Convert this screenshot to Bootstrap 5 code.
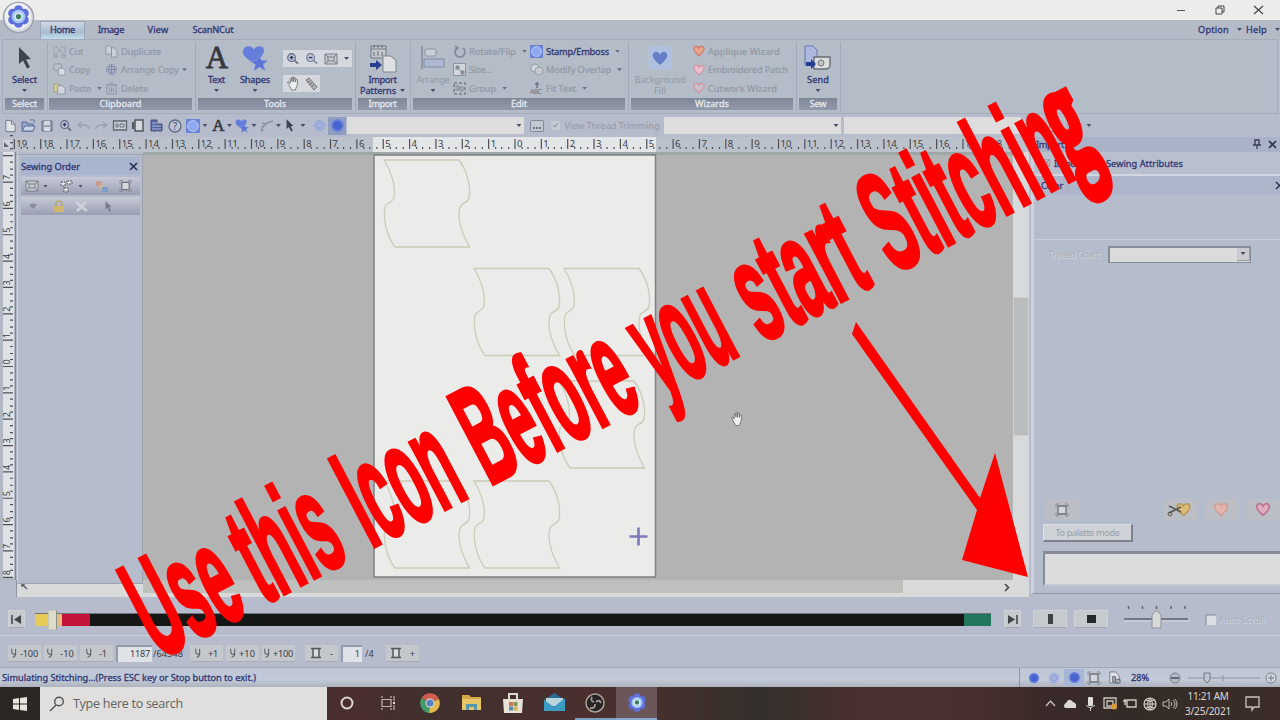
<!DOCTYPE html>
<html lang="en">
<head>
    <meta charset="UTF-8">
    <title>Sewing Simulator</title>
    <meta name="viewport" content="width=device-width, initial-scale=1">
    <!-- Bootstrap CSS CDN -->
    <link href="https://cdn.jsdelivr.net/npm/bootstrap@5.3.2/dist/css/bootstrap.min.css" rel="stylesheet">
    <style>
        body { width: 1280px; height: 720px; overflow: hidden; background: #b6bccb; font: 9.2px/11px "Noto Sans", "Open Sans", sans-serif; color: #33396f; }
        svg { display: block; flex: none; overflow: visible; }
        [data-w] { display: inline-block; white-space: nowrap; flex: none; }
        .caret { width: 5px; height: 3px; background: #4b4f68; clip-path: polygon(0 0, 100% 0, 50% 100%); flex: none; }
        .muted { color: #9299a6; }
        .navy, .cmd.navy { color: #2f3674; -webkit-text-stroke: .3px #2f3674; }

        /* title bar and tabs */
        .titlebar { height: 20px; background: #ececea; padding-right: 17px; gap: 30px; }
        .app-orb { left: 2px; top: 1px; z-index: 5; }
        .tabs { height: 19px; background: #b5bac7; padding-left: 40px; }
        .tab { height: 18px; padding-top: 3px; text-align: center; }
        .tab-home { width: 45px; padding-top: 2px; background: linear-gradient(#cfd9e2, #a9bccf 60%, #bfe0ee); border: 1px solid #9aa7b9; border-bottom: 0; }

        /* ribbon */
        .ribbon { height: 75px; margin: 0 2px; padding-left: 2px; background: #b3bcc7; border: 1px solid #a4acb9; gap: 6px; }
        .group { height: 73px; padding-top: 2px; position: relative; }
        .group::after { content: ""; width: 1px; position: absolute; top: 2px; bottom: 2px; right: -4px; background: #a3aab7; }
        .group-body { height: 56px; }
        .group-title { height: 12px; background: linear-gradient(#7f8797, #9299aa); color: #e4e7ee; -webkit-text-stroke: .3px #e4e7ee; text-align: center; line-height: 12px; }
        .g-select { width: 39px; margin-right: -1px; } .g-clip { width: 143px; } .g-tools { width: 154px; } .g-import { width: 49px; }
        .g-edit { width: 212px; } .g-wiz { width: 162px; } .g-sew { width: 38px; }
        .cmds { display: grid; grid-template-rows: repeat(3, 18.5px); }
        .cmd { display: flex; align-items: center; gap: 3px; height: 18.5px; color: #9299a6; -webkit-text-stroke: .2px; white-space: nowrap; }
        .cmd .caret { margin-left: 3px; opacity: .7; }
        .big { display: flex; flex-direction: column; align-items: center; line-height: 11px; }
        .big .pic { height: 32px; display: flex; align-items: center; }
        .strip { background: #d5d9df; height: 17px; gap: 6px; padding: 0 3px; }

        /* quick toolbar */
        .quick { height: 23px; padding-left: 1px; }
        .q { width: 18.3px; display: flex; justify-content: center; }
        .q2 { width: 24.5px; display: flex; align-items: center; justify-content: flex-end; gap: 2px; padding-right: 1px; }
        .q3 { width: 18px; height: 18px; display: flex; align-items: center; justify-content: center; }
        .combo { height: 17px; background: #dcdddc; padding-right: 3px; display: flex; align-items: center; justify-content: flex-end; }

        /* work area */
        .work { height: 460px; }
        .left { width: 1031px; }
        .hrule { height: 15px; }
        .stage { height: 428px; }
        .vrule { width: 17px; }
        .order { width: 126px; height: 430px; background: #b5bccb; border: 1px solid #9ea3ad; border-left-color: #cdd2dc; z-index: 2; padding: 2px 2px 0 3px; margin: 2px 0 -8px; }
        .order-head { height: 18px; background: #a9b4cf; padding: 0 3px 0 0; }
        .order-bar { height: 18px; background: linear-gradient(#c7c9d6, #9b9fb3); margin-top: 2px; }
        .canvas { width: 870px; background: #b3b3b3; border-top: 3px solid #a0a5a7; }
        .vscroll { width: 16px; background: #d8d9da; padding-top: 145px; }
        .vthumb { height: 139px; background: #bbbcbe; border: 1px solid #cfcfcf; }
        .hscroll { height: 17px; margin-left: 16px; width: 1013px; border-left: 1px solid #8e949d; background: #d9dbda; }
        .hthumb { width: 760px; height: 13px; background: #bec0be; }
        .side { width: 249px; border-left: 3px solid #ccd2de; background: #b5bccb; height: 457px; border-bottom: 1px solid #8e95a5; }
        .side-head { height: 15px; background: #aab2c7; padding: 0 3px 0 2px; }
        .side-tabs { height: 22px; padding-left: 7px; background: #b9bfcd; }
        .color-head { height: 21px; background: #adb5ca; border-top: 2px solid #d2d8e1; padding-left: 7px; }
        .engraved { color: #a8aebb; text-shadow: 1px 1px 0 #d3d7df; }
        .chart-row { height: 23px; border-top: 1px solid #c9cfda; padding: 6px 29px 0 14px; margin-top: 44px; }
        .chart-combo { width: 143px; height: 17px; background: #dadbdb; border: 1px solid #858b98; border-width: 2px 1px 1px 2px; }
        .drop { width: 13px; height: 13px; background: #c9cbd0; border: 1px solid #999da6; border-width: 0 1px 1px 0; }
        .hearts { height: 21px; margin-top: 237px; padding-left: 11px; }
        .hbtn { height: 21px; width: 34px; background: #bbbec4; display: flex; align-items: center; justify-content: center; }
        .palette { width: 90px; height: 18px; margin: 4px 0 0 9px; background: #cfd2d7; border: 1px solid #dee0e4; border-right: 2px solid #7c818d; border-bottom: 2px solid #7c818d; text-align: center; line-height: 15px; color: #9a9ea9; }
        .memo { height: 35px; margin: 9px 0 0 9px; background: #dadbdc; border: 2px solid #868b96; border-width: 3px 0 2px 2px; border-bottom-color: #c3c8d1; }

        /* player */
        .player { height: 38px; padding-left: 8px; padding-top: 6px; }
        .pbtn { height: 18px; background: #c6c9cd; border: 1px solid #d0d3d8; border-bottom-color: #a3a8b3; display: flex; align-items: center; justify-content: center; }
        .threads { width: 956px; height: 13px; margin: 0 13px 0 10px; background: #141716; border-top: 1px solid #6e737c; position: relative; }
        .seg { height: 12px; }
        .knob { position: absolute; left: 13px; top: -4px; width: 9px; height: 20px; background: #dedccb; border: 1px solid #c8c7bb; border-right-color: #8e8e86; }
        .steps { height: 33px; padding: 4px 0 0 8px; border-top: 1px solid #ccd2dc; border-bottom: 1px solid #a1a8b6; color: #3c404c; }
        .sbtn { width: 33px; height: 17px; background: #c4c7cc; border-bottom: 1px solid #a8acb5; display: flex; align-items: center; justify-content: center; gap: 2px; }
        .num { height: 17px; background: #dfe2e6; border: 1px solid #959ba8; border-width: 2px 0 0 2px; text-align: right; padding-right: 2px; line-height: 14px; }
        .statusline { height: 19px; background: linear-gradient(#bdc6d6, #c3cbd8 60%, #adb3bd); padding-left: 2px; }
        .sq { width: 20px; display: flex; justify-content: center; align-items: center; }

        /* taskbar */
        .task { height: 33px; background: linear-gradient(90deg, #2b2726 40px, #4c2e2e 330px, #40302d 430px, #4b2f2f 590px, #42302c 680px, #34302c 760px, #4a302f 860px, #49302e 970px, #3a2a29 1040px, #332b27 1130px, #3c2d29 1279px); color: #dcd8d4; }
        .start { width: 40px; height: 33px; background: #2a2724; }
        .searchbox { width: 287px; height: 33px; background: #e0dfdd; color: #626261; font: 12.5px "Open Sans", sans-serif; padding-left: 10px; gap: 8px; }
        .tk { width: 41.3px; height: 33px; display: flex; align-items: center; justify-content: center; border-bottom: 2px solid transparent; }
        .tk-open { border-bottom-color: #7b9ec2; }
        .tk-on { background: #6b5759; border-bottom-color: #89a9ce; }
        .tray { width: 20px; display: flex; justify-content: center; }
        .clock { width: 50px; font-size: 10px; line-height: 15px; }
        .banner { left: 0; top: 0; z-index: 10; pointer-events: none; }
    </style>
</head>
<body>
    <svg width="0" height="0" class="position-absolute">
        <defs>
            <symbol id="flower" viewBox="0 0 24 24">
                <g fill="#5d70dd"><circle cx="12" cy="5" r="4.6"/><circle cx="18" cy="8.5" r="4.6"/><circle cx="18" cy="15.5" r="4.6"/><circle cx="12" cy="19" r="4.6"/><circle cx="6" cy="15.5" r="4.6"/><circle cx="6" cy="8.5" r="4.6"/></g>
                <circle cx="12" cy="12" r="7" fill="#a9c8f4"/><circle cx="12" cy="12" r="4.2" fill="#dde8f5"/><circle cx="12" cy="12" r="2.7" fill="#3d7d5c"/>
            </symbol>
            <symbol id="arrow" viewBox="0 0 14 22"><path d="M1 0l12 12-5 .5 4 7.500-3 1.500-4-8L1 17z" fill="#3e444e"/></symbol>
            <symbol id="page" viewBox="0 0 14 14"><path d="M2 1h6l4 4v8H2z" fill="#dfe2e7" stroke="#717889"/><path d="M8 1v4h4" fill="none" stroke="#717889"/></symbol>
            <symbol id="report" viewBox="0 0 14 14"><path d="M2 1h6l4 4v8H2z" fill="#dfe2e7" stroke="#717889"/><path d="M5 6h3v6H5zM8 9h5v4H8z" fill="#a9adb7" stroke="#666b79"/></symbol>
            <symbol id="cut" viewBox="0 0 14 14"><path d="M3 1l8 9M11 1L3 10M1 2v9M13 2v9" stroke="#8f96a3" fill="none" stroke-dasharray="3 1"/><circle cx="3" cy="12" r="1.600" fill="none" stroke="#8f96a3"/><circle cx="11" cy="12" r="1.600" fill="none" stroke="#8f96a3"/></symbol>
            <symbol id="copy" viewBox="0 0 14 14"><rect x="1" y="1" width="8" height="7" rx="1" fill="#bac1cb" stroke="#8c93a1"/><path d="M6 6h5l2 2v5H6z" fill="#d9dde3" stroke="#959cab"/></symbol>
            <symbol id="paste" viewBox="0 0 14 14"><path d="M1 2h6v9H1z" fill="#d4cf94" stroke="#9c9c8e"/><path d="M5 4h5l3 3v6H5z" fill="#d2d7dd" stroke="#8f96a5"/></symbol>
            <symbol id="dup" viewBox="0 0 14 14"><path d="M1 1h4l2 2v7H1z M7 3h3l3 3v7H7z" fill="#ccd1d8" stroke="#8d94a2"/></symbol>
            <symbol id="ring" viewBox="0 0 14 14"><circle cx="7" cy="7" r="5.500" fill="none" stroke="#7d86a6" stroke-dasharray="2 .8"/><path d="M7 2v10M2 7h10M4 4h6v6H4z" stroke="#7d86a6" fill="none"/></symbol>
            <symbol id="trash" viewBox="0 0 14 14"><path d="M2 3h10v10H2zM1 3h12M5 1h4M5 6v5M7 6v5M9 6v5" fill="none" stroke="#8f96a3"/></symbol>
            <symbol id="mag" viewBox="0 0 14 14"><circle cx="6" cy="6" r="4.200" fill="#c2cad9" stroke="#5d6685" stroke-width="1.200"/><path d="M9.500 9.500l3.500 3" stroke="#6d6f80" stroke-width="2"/><path d="M4 6h4M6 4v4" stroke="#353b63" stroke-width="1.600"/></symbol>
            <symbol id="magout" viewBox="0 0 14 14"><circle cx="6" cy="6" r="4.200" fill="#c2cad9" stroke="#6d769a" stroke-width="1.200"/><path d="M9.500 9.500l3.500 3" stroke="#8d8f9a" stroke-width="2"/><path d="M4 6h4" stroke="#353b63" stroke-width="1.600"/></symbol>
            <symbol id="fit" viewBox="0 0 14 14"><path d="M1 2h12v10H1z" fill="#c8cbd0" stroke="#777d88"/><path d="M4 5h6v4H4zM1 2l3 3M13 2l-3 3M1 12l3-3M13 12l-3-3" fill="none" stroke="#777d88"/></symbol>
            <symbol id="hand" viewBox="0 0 14 16"><path d="M3 9L1.500 6.500 3 6l1.500 2V3L6 2l.5 4V1.500L8 1v5l.8-4.500L10 2v4.500l1-3 1.500.5-.5 6-2 5H6z" fill="#efefef" stroke="#696d74" stroke-width=".9"/></symbol>
            <symbol id="shapes" viewBox="0 0 26 26"><path d="M12 18C4 13 0 9 1 5c1-5 8-6 11-1 3-5 10-4 10 1 0 4-4 8-10 13z" fill="#667edb"/><path d="M17 10l2.500 5 6 .3-4.500 3.500 2 6.200-5.500-3.500L12 25l1.500-6-4.500-3.500 6-.5z" fill="#5b74d5" stroke="#8194dd" stroke-width=".7"/></symbol>
            <symbol id="stamp" viewBox="0 0 14 14"><rect width="14" height="14" fill="#6c83d8"/><circle cx="7" cy="7" r="5.300" fill="#8fa8f3" stroke="#c0cff6" stroke-width="1"/></symbol>
            <symbol id="disc" viewBox="0 0 14 14"><circle cx="7" cy="7" r="6" fill="#6b83dd"/><circle cx="7" cy="7" r="4.200" fill="#4763d0"/></symbol>
            <symbol id="disc2" viewBox="0 0 14 14"><circle cx="7" cy="7" r="5.500" fill="#a9b6df" stroke="#8293d5" stroke-dasharray="2 1"/><circle cx="7" cy="7" r="3" fill="none" stroke="#8293d5"/></symbol>
            <symbol id="heart" viewBox="0 0 14 14"><path d="M7 12.500C3 9 .8 7 1 4.500 1.300 1 5.500.5 7 3.800 8.500.5 12.700 1 13 4.500 13.200 7 11 9 7 12.500z" fill="inherit" stroke="inherit" stroke-width="1.300"/></symbol>
            <symbol id="sq" viewBox="0 0 14 14"><path d="M3 3h8v8H3z" fill="#d4d6dc" stroke="#6d717c" stroke-width="1.300"/><path d="M1 1h3M10 1h3M1 13h3M10 13h3M1 1v3M13 1v3M1 13v-3M13 13v-3" stroke="#868a95" fill="none"/></symbol>
            <symbol id="spool" viewBox="0 0 12 12"><path d="M1 1.500h10M1 10.500h10M3 2v8M9 2v8" stroke="#55595f" stroke-width="1.500" fill="none"/><path d="M4 3h4v6H4z" fill="#dcdddd"/></symbol>
            <symbol id="needle" viewBox="0 0 9 13"><path d="M1 1v4q0 3 3 3h2V1M6 6q0 6-4 6" fill="none" stroke="#55595f" stroke-width="1.300"/></symbol>
            <symbol id="panelpiece" viewBox="0 0 90 90" overflow="visible"><path d="M0 0H75C84 12 87 28 85 38C84 43 78 42 76 47C73 58 77 72 85.500 87H11C2 75 -1 58 1 47C2 42 9 43 10 37C12 25 6 9 0 0Z" fill="#ebebea" stroke="#cbcbb8" stroke-width="1.300"/></symbol>
        </defs>
    </svg>

    <!-- Application button -->
    <svg class="app-orb position-absolute" width="33" height="33" viewBox="0 0 34 34"><circle cx="17" cy="17" r="15.500" fill="#d9dce3" stroke="#9ba1ad" stroke-width="1.500"/><circle cx="16.500" cy="15.500" r="13.500" fill="#f0f1f3"/><use href="#flower" x="5" y="4" width="24" height="24"/></svg>

    <div class="titlebar d-flex justify-content-end align-items-center">
        <svg width="9" height="10"><path d="M1 5.500h8" stroke="#555"/></svg>
        <svg width="9" height="10"><path d="M1 3h6v6H1zM3 3V1h6v6H7" fill="none" stroke="#444"/></svg>
        <svg width="9" height="10"><path d="M0 1l9 8M9 1L0 9" stroke="#444" stroke-width="1.200"/></svg>
    </div>

    <div class="tabs d-flex align-items-end navy">
        <div class="tab tab-home"><span data-w="25">Home</span></div>
        <div class="tab" style="width:52px"><span data-w="26">Image</span></div>
        <div class="tab" style="width:42px"><span data-w="21">View</span></div>
        <div class="tab" style="width:68px"><span data-w="41">ScanNCut</span></div>
        <div class="ms-auto d-flex align-items-center pb-1"><span data-w="31">Option</span><span class="caret ms-2 me-1"></span><span data-w="21">Help</span><span class="caret ms-2"></span></div>
    </div>

    <!-- Ribbon -->
    <div class="ribbon d-flex">
        <div class="group g-select">
            <div class="group-body big navy"><div class="pic"><svg width="14" height="22"><use href="#arrow"/></svg></div><span data-w="25">Select</span><span class="caret mt-1"></span></div>
            <div class="group-title"><span data-w="25">Select</span></div>
        </div>
        <div class="group g-clip">
            <div class="group-body d-flex ps-1">
                <div class="cmds" style="width:52px">
                    <div class="cmd"><svg width="13" height="13"><use href="#cut"/></svg><span data-w="14">Cut</span></div>
                    <div class="cmd"><svg width="13" height="13"><use href="#copy"/></svg><span data-w="21">Copy</span></div>
                    <div class="cmd"><svg width="13" height="13"><use href="#paste"/></svg><span data-w="22">Paste</span><span class="caret"></span></div>
                </div>
                <div class="cmds">
                    <div class="cmd"><svg width="13" height="13"><use href="#dup"/></svg><span data-w="40">Duplicate</span></div>
                    <div class="cmd"><svg width="13" height="13"><use href="#ring"/></svg><span data-w="58">Arrange Copy</span><span class="caret ms-0"></span></div>
                    <div class="cmd"><svg width="13" height="13"><use href="#trash"/></svg><span data-w="27">Delete</span></div>
                </div>
            </div>
            <div class="group-title"><span data-w="42">Clipboard</span></div>
        </div>
        <div class="group g-tools">
            <div class="group-body d-flex">
                <div class="big navy" style="width:37px"><div class="pic"><svg width="24" height="26"><text x="12" y="23" text-anchor="middle" font-family="Liberation Serif" font-size="31" fill="#33383f" stroke="#33383f" stroke-width=".8">A</text></svg></div><span data-w="17">Text</span><span class="caret mt-1"></span></div>
                <div class="big navy" style="width:40px"><div class="pic"><svg width="26" height="27"><use href="#shapes"/></svg></div><span data-w="30">Shapes</span><span class="caret mt-1"></span></div>
                <div class="d-flex flex-column gap-2 ps-2 pt-2">
                    <div class="strip d-flex align-items-center"><svg width="13" height="13"><use href="#mag"/></svg><svg width="13" height="13"><use href="#magout"/></svg><svg width="14" height="14"><use href="#fit"/></svg><span class="caret"></span></div>
                    <div class="strip d-flex align-items-center align-self-start"><svg width="13" height="15"><use href="#hand"/></svg><svg width="12" height="13"><path d="M1 3l3-2 8 9-3 3z" fill="#b6b9b8" stroke="#70757a"/><path d="M3 5l2-1M5 7l2-1M7 9l2-1" stroke="#666"/></svg></div>
                </div>
            </div>
            <div class="group-title"><span data-w="22">Tools</span></div>
        </div>
        <div class="group g-import">
            <div class="group-body big navy"><div class="pic"><svg width="26" height="28"><path d="M1 2h15v12H1zM1 5h15" fill="#c5c9cf" stroke="#70757e"/><path d="M4 8v4M8 7v5M12 8v4M4 1v3M8 1v3M12 1v3" stroke="#646a74"/><path d="M13 12h8l5 5v11H13z" fill="#dee0e4" stroke="#7f848f"/><path d="M0 19h6v-3l6 5-6 5v-3H0z" fill="#29418d"/></svg></div><span data-w="28">Import</span><span class="d-flex align-items-center gap-1"><span data-w="36">Patterns</span><span class="caret"></span></span></div>
            <div class="group-title"><span data-w="28">Import</span></div>
        </div>
        <div class="group g-edit">
            <div class="group-body d-flex">
                <div class="big muted" style="width:40px"><div class="pic"><svg width="24" height="24"><path d="M1 0v23" stroke="#858c9b" stroke-width="1.500"/><rect x="4" y="3" width="11" height="7" rx="2" fill="#cad0d8" stroke="#8c93a2"/><rect x="3" y="13" width="20" height="8" fill="#adb9d2" stroke="#828ba1"/></svg></div><span data-w="33">Arrange</span><span class="caret mt-1"></span></div>
                <div class="cmds" style="width:77px">
                    <div class="cmd"><svg width="13" height="13"><path d="M4 3a5 5 0 1 0 6 0M2 1l3 2-3 3" fill="none" stroke="#838997" stroke-width="1.700"/></svg><span data-w="47">Rotate/Flip</span><span class="caret"></span></div>
                    <div class="cmd"><svg width="13" height="13"><rect x=".5" y=".5" width="12" height="12" fill="#d2d5db" stroke="#8e94a1"/><path d="M3 3h3v3H3zM8 8h3v3H8zM6 6l2 2" fill="#858b9b" stroke="#858b9b"/></svg><span data-w="23">Size...</span></div>
                    <div class="cmd"><svg width="13" height="13"><path d="M1 1h11v11H1z" fill="none" stroke="#878d99" stroke-width="2" stroke-dasharray="3 2"/><path d="M3 4h3v4H3zM7 5h3v4H7z" fill="#a4aab6" stroke="#878d99"/></svg><span data-w="27">Group</span><span class="caret"></span></div>
                </div>
                <div class="cmds">
                    <div class="cmd navy"><svg width="13" height="13"><use href="#stamp"/></svg><span data-w="63">Stamp/Emboss</span><span class="caret"></span></div>
                    <div class="cmd"><svg width="13" height="13"><circle cx="5" cy="5" r="4" fill="#d1d4d8" stroke="#989eaa"/><circle cx="9" cy="8" r="4" fill="#c6c9cf" stroke="#989eaa"/></svg><span data-w="65">Modify Overlap</span><span class="caret"></span></div>
                    <div class="cmd"><svg width="13" height="13"><text x="0" y="12" font-size="7" textLength="12" fill="#6f7683">ABC</text><path d="M7 0v6M5 2h4" stroke="#6d7482" stroke-width="1.500"/></svg><span data-w="30">Fit Text</span><span class="caret"></span></div>
                </div>
            </div>
            <div class="group-title"><span data-w="16">Edit</span></div>
        </div>
        <div class="group g-wiz">
            <div class="group-body d-flex">
                <div class="big muted" style="width:58px"><div class="pic"><svg width="24" height="26"><rect x="1" y="2" width="22" height="22" rx="3" fill="#aebfe0" stroke="#b4caed" stroke-dasharray="2 2"/><path d="M12 20C6 15 4 12 5 9c1-3 6-3 7 1 1-4 6-4 7-1 1 3-1 6-7 11z" fill="#677fca"/></svg></div><span data-w="51">Background</span><span data-w="12">Fill</span></div>
                <div class="cmds ps-1">
                    <div class="cmd"><svg width="12" height="12" fill="#e5a88d" stroke="#d4726d"><use href="#heart"/></svg><span data-w="72">Applique Wizard</span></div>
                    <div class="cmd"><svg width="12" height="12" fill="#e8c1ce" stroke="#d990a1"><use href="#heart"/></svg><span data-w="80">Embroidered Patch</span></div>
                    <div class="cmd"><svg width="12" height="12" fill="#c8bfca" stroke="#d6929c"><use href="#heart"/></svg><span data-w="69">Cutwork Wizard</span></div>
                </div>
            </div>
            <div class="group-title"><span data-w="34">Wizards</span></div>
        </div>
        <div class="group g-sew">
            <div class="group-body big navy"><div class="pic"><svg width="28" height="27"><path d="M1 1h8l4 4v15H1z" fill="#adb9df" stroke="#6476b0"/><path d="M10 12h16v8q0 4-5 4H10z" fill="#dcdddd" stroke="#686d77" stroke-width="1.400"/><circle cx="17" cy="18" r="3" fill="#bfc2c5" stroke="#777"/><path d="M2 17h5v-3l5 5-5 5v-3H2z" fill="#263c93"/></svg></div><span data-w="22">Send</span><span class="caret mt-1"></span></div>
            <div class="group-title"><span data-w="17">Sew</span></div>
        </div>
    </div>

    <!-- Quick toolbar -->
    <div class="quick d-flex align-items-center">
        <span class="q"><svg width="13" height="14"><use href="#page"/></svg></span>
        <span class="q"><svg width="14" height="13"><path d="M1 3h5l1 2h5v7H1z" fill="#98a6c8" stroke="#596b9c"/><path d="M1 12l3-5h10l-2 5zM9 1h4v3" fill="#cbd4e5" stroke="#596b9c"/></svg></span>
        <span class="q"><svg width="12" height="12"><path d="M1 1h10v10H1z" fill="#9da5b4" stroke="#626b80"/><path d="M3 1h6v4H3zM3 7h6v4H3z" fill="#d3d7de"/></svg></span>
        <span class="q"><svg width="13" height="13"><use href="#mag"/></svg></span>
        <span class="q"><svg width="13" height="10"><path d="M5 1L1 4l4 3M1 4h7q4 1 4 4" fill="none" stroke="#9ba2b0" stroke-width="1.500"/></svg></span>
        <span class="q"><svg width="13" height="10"><path d="M8 1l4 3-4 3M12 4H5Q1 5 1 8" fill="none" stroke="#9ba2b0" stroke-width="1.500"/></svg></span>
        <span class="q"><svg width="14" height="13"><path d="M.5 2h13v9H.5z" fill="#c8ccd3" stroke="#5f6572" stroke-width="1.300"/><path d="M3 5h2v3H3zM7 5h4v3H7z" fill="none" stroke="#6c7280"/></svg></span>
        <span class="q"><svg width="12" height="14"><path d="M3 1h8v11H3z" fill="#d6d8dc" stroke="#51565f" stroke-width="1.500"/><path d="M0 3h2v7H0z" fill="#51565f"/></svg></span>
        <span class="q"><svg width="13" height="13"><path d="M1 1h6v11H1zM8 5h4v7H8z" fill="#5467ad" stroke="#465078"/><path d="M2 4h5M2 7h9M2 10h9" stroke="#aeb8d7"/></svg></span>
        <span class="q"><svg width="14" height="14"><circle cx="7" cy="7" r="6" fill="#bec5d4" stroke="#616a84" stroke-width="1.300"/><text x="7" y="10.500" font-size="10" text-anchor="middle" fill="#454e72">?</text></svg></span>
        <span class="q2"><svg width="14" height="14"><use href="#stamp"/></svg><span class="caret"></span></span>
        <span class="q2"><svg width="13" height="14"><text x="6.500" y="12" text-anchor="middle" font-family="Liberation Serif" font-size="17" fill="#33383f" stroke="#33383f" stroke-width=".6">A</text></svg><span class="caret"></span></span>
        <span class="q2"><svg width="14" height="14"><use href="#shapes"/></svg><span class="caret"></span></span>
        <span class="q2"><svg width="14" height="12"><path d="M1 11Q3 3 13 1M1 11l3-1M5 4l-3-1" fill="none" stroke="#858c9a" stroke-width="1.300"/></svg><span class="caret"></span></span>
        <span class="q2"><svg width="8" height="13"><use href="#arrow"/></svg><span class="caret ms-1"></span></span>
        <span class="q3 ms-1"><svg width="13" height="13"><use href="#disc2"/></svg></span>
        <span class="q3" style="background:#8f9dc1"><svg width="15" height="15"><use href="#disc"/></svg></span>
        <span class="combo" style="width:177px;margin-left:1px"><span class="caret"></span></span>
        <span class="q3 ms-1"><svg width="14" height="12"><rect x=".5" y=".5" width="13" height="11" rx="1" fill="#c2c7d0" stroke="#818898"/><path d="M3 8h8" stroke="#6c7282" stroke-width="2" stroke-dasharray="2 1"/></svg></span>
        <span class="q3"><svg width="9" height="9"><rect width="9" height="9" fill="#c5cad2"/><path d="M2 4l2 2 3-4" fill="none" stroke="#7f8694"/></svg></span>
        <span class="muted" data-w="95">View Thread Trimming</span>
        <span class="combo" style="width:177px;margin-left:5px"><span class="caret"></span></span>
        <span class="combo" style="width:177px;margin-left:3px"></span>
        <span class="q3 ms-4"><svg width="12" height="12"><use href="#page"/></svg></span>
        <span class="q3"><svg width="12" height="12" opacity=".5"><use href="#page"/></svg></span>
        <span class="caret" style="margin-left:5px"></span>
    </div>

    <div class="work d-flex">
        <div class="left">
            <svg class="hrule" id="hrule" width="1031" height="15" viewBox="0 0 1031 15"></svg>
            <div class="stage d-flex">
                <svg class="vrule" id="vrule" width="17" height="428" viewBox="0 0 17 428"></svg>
                <div class="order position-relative">
                    <div class="order-head d-flex align-items-center justify-content-between"><span data-w="59" class="navy">Sewing Order</span><svg width="7" height="7"><path d="M0 0l7 7M7 0L0 7" stroke="#2d3355" stroke-width="1.700"/></svg></div>
                    <div class="order-bar d-flex align-items-center ps-1">
                        <svg width="14" height="14"><use href="#fit"/></svg><span class="caret ms-1 me-2"></span>
                        <svg width="14" height="13" class="ms-1"><path d="M1 2h4v4H1zM7 1h5v3H7zM4 8h4v4H4z" fill="#dfe1e5" stroke="#565b67" stroke-dasharray="2 1"/></svg><span class="caret ms-1 me-2"></span>
                        <svg width="14" height="13" class="ms-1"><path d="M1 1h6v5H1z" fill="#cb9d94"/><path d="M5 5h4v4H5z" fill="#cdb98a"/><path d="M7 7h6v5H7z" fill="#7b9dc3"/></svg>
                        <svg width="13" height="14" class="ms-auto me-2"><use href="#sq"/></svg>
                    </div>
                    <div class="order-bar d-flex align-items-center ps-2">
                        <svg width="8" height="8"><path d="M0 3q4-3 8 0l-4 4z" fill="#8a8c98"/></svg>
                        <svg width="12" height="13" class="ms-3"><path d="M3 6V4a3 3 0 0 1 6 0v2" fill="none" stroke="#b8a671" stroke-width="1.500"/><rect x="1" y="6" width="10" height="6" rx="1" fill="#d0b66e"/></svg>
                        <svg width="12" height="12" class="ms-2 me-1"><path d="M1 2l11 9M11 2L2 11" stroke="#ced0da" stroke-width="2.500" transform="translate(2)"/></svg>
                        <svg width="7" height="11" class="ms-3" opacity=".5"><use href="#arrow"/></svg>
                    </div>
                </div>
                <svg class="canvas" id="canvas" width="870" height="428" viewBox="143 155 870 425">
                    <rect x="374" y="155" width="281.500" height="422" fill="#ebebea" stroke="#7d8085" stroke-width="1.500"/>
                    <use href="#panelpiece" x="384" y="160" width="90" height="90"/>
                    <use href="#panelpiece" x="474" y="268.500" width="90" height="90"/>
                    <use href="#panelpiece" x="564" y="268.500" width="90" height="90"/>
                    <use href="#panelpiece" x="559" y="381" width="90" height="90"/>
                    <use href="#panelpiece" x="384" y="481" width="90" height="90"/>
                    <use href="#panelpiece" x="474" y="481" width="90" height="90"/>
                    <path d="M638.500 527.500v18M629.500 536.500h18" stroke="#7d79bb" stroke-width="2.600"/>
                    <use href="#hand" x="730" y="411" width="13" height="16"/>
                </svg>
                <div class="vscroll"><div class="vthumb"></div></div>
            </div>
            <div class="hscroll d-flex"><div style="width:126px"><svg width="9" height="9" class="ms-1"><path d="M1 7V4h3M1 4l5 5" fill="none" stroke="#5e6470" stroke-width="1.500"/></svg></div><div class="hthumb"></div><svg class="ms-auto me-3 mt-1" width="9" height="8"><path d="M1 0l3.500 3.500L1 7" fill="none" stroke="#444" stroke-width="1.600"/></svg></div>
        </div>

        <!-- Sewing attributes / color panel -->
        <div class="side">
            <div class="side-head d-flex align-items-center"><span data-w="28" class="navy">Import</span><svg class="ms-auto me-2" width="8" height="9"><path d="M2 0h4v5H2zM0 5h8M4 5v4" fill="none" stroke="#383d58" stroke-width="1.300"/></svg><svg width="8" height="8"><path d="M0 0l7 7M7 0L0 7" stroke="#2e3352" stroke-width="1.700"/></svg></div>
            <div class="side-tabs d-flex align-items-center navy"><svg width="9" height="10"><use href="#fit"/></svg><span data-w="28" class="ms-1">Import</span><span data-w="77" style="margin-left:24px">Sewing Attributes</span></div>
            <div class="color-head d-flex align-items-center navy"><span data-w="22">Color</span><svg class="ms-auto" width="4" height="8"><path d="M0 0l7 7M7 0L0 7" stroke="#2e3352" stroke-width="1.500"/></svg></div>
            <div class="chart-row d-flex align-items-center justify-content-between"><span data-w="52" class="engraved">Thread Chart:</span><div class="chart-combo d-flex justify-content-end"><span class="drop d-flex align-items-center justify-content-center"><span class="caret"></span></span></div></div>
            <div class="hearts d-flex">
                <span class="hbtn"><svg width="14" height="14"><use href="#sq"/></svg></span>
                <span class="hbtn" style="margin-left:84px"><svg width="24" height="15"><g fill="#d8bd72" stroke="#b8975b"><use href="#heart" x="8" width="15" height="15"/></g><path d="M1 4l12 6M1 11l12-6" stroke="#57554f" stroke-width="1.500"/><circle cx="2" cy="12" r="2" fill="none" stroke="#57554f"/></svg></span>
                <span class="hbtn ms-2"><svg width="16" height="15" fill="#e2b6ae" stroke="#d29c93"><use href="#heart"/></svg></span>
                <span class="hbtn ms-2"><svg width="16" height="15" fill="#dfacbf" stroke="#bd6d8b"><use href="#heart"/></svg></span>
            </div>
            <div class="palette"><span data-w="64">To palette mode</span></div>
            <div class="memo"></div>
        </div>
    </div>

    <!-- Stitch simulator player -->
    <div class="player d-flex align-items-center">
        <span class="pbtn" style="width:17px"><svg width="11" height="9"><path d="M1 0v9" stroke="#41454b" stroke-width="1.500"/><path d="M10 0v9L3 4.500z" fill="#41454b"/></svg></span>
        <div class="threads d-flex"><div class="seg" style="width:22px;background:#e7cb57"></div><div class="seg" style="width:5px;background:#e6bd80"></div><div class="seg" style="width:28px;background:#c31338"></div><div class="seg ms-auto" style="width:27px;background:#22765e"></div><span class="knob"></span></div>
        <span class="pbtn" style="width:17px"><svg width="11" height="9"><path d="M10 0v9" stroke="#41454b" stroke-width="1.500"/><path d="M1 0v9l7-4.500z" fill="#41454b"/></svg></span>
        <span class="pbtn" style="width:34px;margin-left:12px"><svg width="5" height="10"><path d="M0 0h5v10H0z" fill="#3f4347"/></svg></span>
        <span class="pbtn" style="width:34px;margin-left:7px"><svg width="9" height="8"><path d="M0 0h9v8H0z" fill="#25282a"/></svg></span>
        <svg width="68" height="28" style="margin-left:16px"><path d="M4.500 1v3M18.500 1v3M32.500 1v3M47 1v3M61 1v3" stroke="#5f6470" stroke-width="1.500"/><path d="M0 14h64" stroke="#737987" stroke-width="2"/><path d="M0 16h66" stroke="#d3d7de"/><path d="M28 10l4.500-5 4.500 5v13h-9z" fill="#d8dad9" stroke="#8b8f98"/></svg>
        <svg width="10" height="11" style="margin-left:13px"><rect x="1" y="1" width="10" height="10" fill="#dadde2"/><path d="M1 11V1h10" fill="none" stroke="#808592"/></svg>
        <span data-w="46" class="engraved ms-1">Auto Scroll</span>
    </div>
    <div class="steps d-flex align-items-center">
        <span class="sbtn"><svg width="7" height="12"><use href="#needle"/></svg><span data-w="18">-100</span></span>
        <span class="sbtn" style="margin-left:3px"><svg width="7" height="12"><use href="#needle"/></svg><span data-w="14" class="ms-1">-10</span></span>
        <span class="sbtn" style="margin-left:3px"><svg width="7" height="12"><use href="#needle"/></svg><span data-w="8" class="ms-1">-1</span></span>
        <span class="num" style="width:36px;margin-left:3px"><span data-w="20">1187</span></span>
        <span data-w="30" style="margin-left:1px">/64348</span>
        <span class="sbtn" style="margin-left:7px"><svg width="7" height="12"><use href="#needle"/></svg><span data-w="10" class="ms-1">+1</span></span>
        <span class="sbtn" style="margin-left:3px"><svg width="7" height="12"><use href="#needle"/></svg><span data-w="16">+10</span></span>
        <span class="sbtn" style="margin-left:3px"><svg width="7" height="12"><use href="#needle"/></svg><span data-w="20">+100</span></span>
        <span class="sbtn gap-2" style="margin-left:10px"><svg width="12" height="12"><use href="#spool"/></svg><span>-</span></span>
        <span class="num" style="width:21px;margin-left:3px">1</span>
        <span data-w="9" style="margin-left:3px">/4</span>
        <span class="sbtn gap-2" style="margin-left:12px"><svg width="12" height="12"><use href="#spool"/></svg><span>+</span></span>
    </div>
    <div class="statusline d-flex align-items-center navy">
        <span data-w="254">Simulating Stitching...(Press ESC key or Stop button to exit.)</span>
        <div class="ms-auto d-flex align-items-center h-100" style="border-left:1px solid #8c93a2;padding-left:4px;width:261px">
            <span class="sq"><svg width="12" height="12"><use href="#disc"/></svg></span>
            <span class="sq"><svg width="12" height="12"><use href="#disc2"/></svg></span>
            <span class="sq" style="background:#a8b6d6;height:17px"><svg width="13" height="13"><use href="#disc"/></svg></span>
            <span class="sq"><svg width="14" height="14"><use href="#sq"/></svg></span>
            <span class="sq"><svg width="13" height="13"><use href="#report"/></svg></span>
            <span data-w="18" style="margin-left:7px">28%</span>
            <svg width="110" height="14" style="margin-left:19px"><circle cx="7" cy="7" r="5" fill="#b6bac4" stroke="#777c8a"/><path d="M3 7h8" stroke="#62677a" stroke-width="2"/><path d="M20 7h72M55 4v6" stroke="#8d93a1"/><path d="M36 2h6v7l-3 3-3-3z" fill="#c1c5cd" stroke="#6f7584"/><circle cx="103" cy="7" r="5" fill="#d5d8dd" stroke="#777c8a"/><path d="M100 7h6M103 4v6" stroke="#858b98" stroke-width="1.300"/></svg>
        </div>
    </div>

    <!-- Taskbar -->
    <div class="task d-flex align-items-center">
        <div class="start d-flex align-items-center justify-content-center"><svg width="14" height="14"><path d="M0 2l6-1v5.500H0zM7 1l7-1v6.500H7zM0 7.500h6V13l-6-1zM7 7.500h7V14l-7-1z" fill="#e9e5dd"/></svg></div>
        <div class="searchbox d-flex align-items-center"><svg width="15" height="15"><circle cx="9" cy="5.500" r="4.300" fill="none" stroke="#555" stroke-width="1.400"/><path d="M6 9l-6 6" stroke="#555" stroke-width="1.500"/></svg><span data-w="110">Type here to search</span></div>
        <span class="tk"><svg width="14" height="14"><circle cx="6" cy="7" r="5.500" fill="none" stroke="#ded8d5" stroke-width="2"/></svg></span>
        <span class="tk"><svg width="15" height="14"><path d="M1 3.500h9v7H1zM1 0v2M10 0v2M1 14v-2M10 14v-2M13 0v5M13 9v5" fill="none" stroke="#bcb4b2" stroke-width="1.200"/><path d="M12 6h2v2h-2z" fill="#ddd"/></svg></span>
        <span class="tk"><svg width="20" height="20" viewBox="0 0 20 20"><path d="M10 10L1.500 5A10 10 0 0 1 19 6z" fill="#d15c50"/><path d="M10 10l-1 10A10 10 0 0 1 1.500 5z" fill="#439b69"/><path d="M10 10l9-4a10 10 0 0 1-10 14z" fill="#e2b94e"/><circle cx="10" cy="10" r="4.500" fill="#e2e2e0"/><circle cx="10" cy="10" r="3.500" fill="#5682c1"/></svg></span>
        <span class="tk"><svg width="19" height="17"><path d="M0 1h7l2 2h10v13H0z" fill="#d7a847"/><path d="M0 5h19v11H0z" fill="#e7c568"/><path d="M4 16v-6h11v6h-3v-3H7v3z" fill="#5798a9"/></svg></span>
        <span class="tk"><svg width="20" height="20"><path d="M6 6V1h8v5" fill="none" stroke="#ddd8cf" stroke-width="2"/><path d="M0 6h20l-1 14H1z" fill="#e7e1d6"/><path d="M6 9h4v4H6z" fill="#c97757"/><path d="M10.500 9h4v4h-4z" fill="#7e9a5c"/><path d="M6 13.500h4v4H6z" fill="#548aa9"/><path d="M10.500 13.500h4v4h-4z" fill="#d3ae50"/></svg></span>
        <span class="tk"><svg width="21" height="19"><path d="M0 7l10.500-7L21 7v11H0z" fill="#2a6b98"/><path d="M2 5h17v8H2z" fill="#b9d6de"/><path d="M0 7l10 7L21 5v13H0z" fill="#3c9bc3"/></svg></span>
        <span class="tk tk-open"><svg width="20" height="20"><circle cx="10" cy="10" r="9" fill="#272322" stroke="#aaa19b" stroke-width="1.500"/><path d="M9 9Q5 8 7 4M11 9q3-3 5 1M10 11q0 5-5 4" fill="none" stroke="#9f9995" stroke-width="1.800"/></svg></span>
        <span class="tk tk-on"><svg width="20" height="19"><use href="#flower"/></svg></span>
        <div class="ms-auto d-flex align-items-center" style="width:240px">
            <span class="tray"><svg width="11" height="7"><path d="M1 6l4.500-5L10 6" fill="none" stroke="#cbc5c0" stroke-width="1.300"/></svg></span>
            <span class="tray"><svg width="14" height="10"><path d="M2 9a3 3 0 0 1 1-5q3-6 7-1 4 1 3 6z" fill="#ddd9d5"/></svg></span>
            <span class="tray"><svg width="9" height="14"><rect x="2" y="0" width="5" height="9" rx="1" fill="#e1ddd9"/><path d="M0 8q4 5 9 0M4.500 10v4" stroke="#d3cfca" fill="none"/></svg></span>
            <span class="tray"><svg width="15" height="13"><path d="M1 1h12v10H1zM4 4h6v5H4z" fill="none" stroke="#ccc5bd" stroke-width="1.300"/><circle cx="11" cy="9.500" r="3" fill="#d89b37"/></svg></span>
            <span class="tray"><svg width="14" height="9"><path d="M4 1h9v7H4zM0 2h4M2 0v6" fill="none" stroke="#cec8c2" stroke-width="1.400"/></svg></span>
            <span class="tray"><svg width="14" height="14"><circle cx="7" cy="7" r="6" fill="none" stroke="#d8d2cc" stroke-width="1.200"/><path d="M1 7h12M7 1v12M3 3q4 3 8 0M3 11q4-3 8 0M7 1q-5 6 0 12M7 1q5 6 0 12" fill="none" stroke="#d8d2cc"/></svg></span>
            <span class="tray"><svg width="14" height="12"><path d="M0 4h3l3-3v10L3 8H0zM8 4q2 2 0 4M10 2q4 4 0 8M12 1q4 5 0 10" fill="none" stroke="#c1bab5"/></svg></span>
            <div class="clock text-center" style="margin-left:3px"><span data-w="41">11:21 AM</span><br><span data-w="46">3/25/2021</span></div>
            <svg width="15" height="15" style="margin-left:12px"><path d="M1 1h13v10H9l-2 3v-3H1z" fill="none" stroke="#ccc5be" stroke-width="1.300"/></svg>
        </div>
    </div>

    <!-- Tutorial callout laid over the window -->
    <svg class="banner position-absolute" width="1280" height="720" viewBox="0 0 1280 720" fill="#f00">
        <g id="caption" transform="translate(160 659) rotate(-27.7)" font-family="Liberation Sans, sans-serif" font-weight="bold" font-size="142" stroke="#f00" stroke-width="4.400"></g>
        <path d="M856 322L980 498L995 453L1028 577L962 560L977 510L852 334Z"/>
    </svg>

    <script src="https://cdn.jsdelivr.net/npm/bootstrap@5.3.2/dist/js/bootstrap.bundle.min.js"></script>
    <script>
        // spread each label over its set width
        document.querySelectorAll('[data-w]').forEach(el => {
            const gap = (el.dataset.w - el.getBoundingClientRect().width) / el.textContent.length;
            el.style.letterSpacing = gap.toFixed(3) + 'px';
        });

        // rulers, one numbered tick per centimetre
        const cm = 26.35;
        let h = '<rect width="1031" height="15" fill="#bcc2cc"/><rect x="373" width="283" height="15" fill="#e3e5e7"/><path d="M3 3h9v9H3z" fill="#d0d4da"/><path d="M4 10V5l5 5z" fill="#666"/>';
        for (let i = -19; i <= 19; i++) {
            const x = 515 + i * cm;
            if (x > 1010) break;
            h += `<path d="M${x} 2v10M${x + 7} 10v2M${x + 13} 10v2M${x + 20} 10v2" stroke="#4c5059" stroke-width="1.200"/>`;
            h += `<text x="${x + 2}" y="9.500" font-size="9.500" fill="#3b3f48">${Math.abs(i)}</text>`;
        }
        document.getElementById('hrule').innerHTML = h;

        let v = '<rect width="17" height="428" fill="#b2b8c3"/><rect x="3" width="11" height="426" fill="#dfe1e4"/><path d="M15.500 0v428" stroke="#82868e"/>';
        for (let i = -8; i <= 8; i++) {
            const y = 214.5 + i * cm;
            v += `<path d="M3 ${y}h10M10 ${y - 7}h3M10 ${y - 13}h3M10 ${y - 20}h3" stroke="#4c5059" stroke-width="1.200"/>`;
            if (i > -8) v += `<text transform="translate(10 ${y - 2}) rotate(-90)" font-size="9" fill="#3b3f48">${Math.abs(i)}</text>`;
        }
        document.getElementById('vrule').innerHTML = v;

        // caption words: text, start, length along the slanted baseline
        const words = [['Use', -1, 103], ['this', 117, 99], ['Icon', 238, 113], ['Before', 372, 176], ['you', 566, 91], ['start', 680, 127], ['Stitchin', 829, 208], ['g', 1033, 36]];
        document.getElementById('caption').innerHTML = words.map(([t, x, w]) =>
            `<text x="${x}" y="${t === 'g' ? -3 : 0}" textLength="${w}" lengthAdjust="spacingAndGlyphs"${t === 'g' ? ' font-family="Open Sans" font-weight="800" stroke-width="2.400" font-size="148"' : ''}>${t}</text>`).join('');
    </script>
</body>
</html>
